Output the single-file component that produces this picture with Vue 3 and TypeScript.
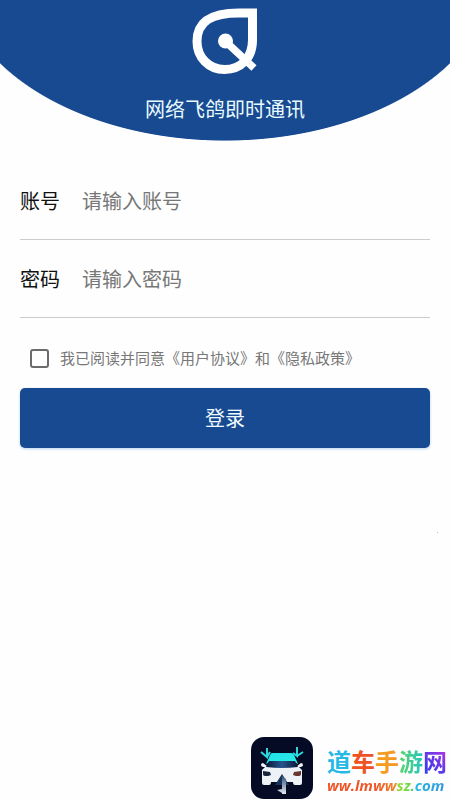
<script setup lang="ts">
import { ref } from 'vue'

const account = ref('')
const password = ref('')
const agreed = ref(false)

const siteName = [
  { char: '道', tone: 'cyan' },
  { char: '车', tone: 'red' },
  { char: '手', tone: 'orange' },
  { char: '游', tone: 'green' },
  { char: '网', tone: 'violet' },
]
</script>

<template>
  <main class="page">
    <header class="hero">
      <svg class="logo" viewBox="0 0 66 66" aria-hidden="true">
        <path d="M60.500 5H47C20 5 5 13 5 33.500C5 49.500 17 61.500 32.500 61.500C49 61.500 60.500 50 60.500 32Z" fill="none" stroke="#fff" stroke-width="9" />
        <path d="M33 33L62 60" stroke="#fff" stroke-width="7.500" />
        <circle cx="33.500" cy="33" r="7.500" fill="#fff" />
      </svg>
      <h1>网络飞鸽即时通讯</h1>
    </header>

    <form class="form" @submit.prevent>
      <div class="field">
        <label for="account">账号</label>
        <input id="account" v-model="account" type="text" placeholder="请输入账号" />
      </div>
      <div class="field">
        <label for="password">密码</label>
        <input id="password" v-model="password" type="password" placeholder="请输入密码" />
      </div>
      <div class="agree">
        <input id="agree" v-model="agreed" type="checkbox" />
        <label for="agree">我已阅读并同意《用户协议》和《隐私政策》</label>
      </div>
      <button class="login" type="submit">登录</button>
    </form>

    <span class="speck" aria-hidden="true"></span>

    <footer class="brand">
      <svg class="badge" viewBox="0 0 62 62" aria-hidden="true">
        <defs>
          <linearGradient id="roof" x1="0" y1="0" x2="1" y2="1">
            <stop offset="0" stop-color="#22dfe8" />
            <stop offset="1" stop-color="#2aeee8" />
          </linearGradient>
          <linearGradient id="glass" x1="0" y1="0" x2="1" y2="0">
            <stop offset="0" stop-color="#0a1738" />
            <stop offset=".5" stop-color="#24558d" />
            <stop offset="1" stop-color="#0a1738" />
          </linearGradient>
          <linearGradient id="stem" x1="0" y1="0" x2="0" y2="1">
            <stop offset="0" stop-color="#35527a" />
            <stop offset="1" stop-color="#e1eaf2" />
          </linearGradient>
        </defs>
        <rect width="62" height="62" rx="13" fill="#050b25" />
        <path d="M21 16h19q2 0 3 2l4 9-4-2H19l-4 2 4-9q1-2 2-2Z" fill="url(#roof)" />
        <path d="M12 26q-2 0-2 2t4 2l-3 3v13q0 2 2 2h5q2 0 2-3h22q0 3 2 3h5q2 0 2-2V33l-3-3q4 0 4-2t-2-2l-4 3H16Z" fill="#edf2f7" />
        <path d="M18 24h26l3 6q-16 2-32 0Z" fill="url(#glass)" />
        <path d="M12 34l7 1 1 3-3 1h-3q-2 0-2-2Z" fill="#17253f" />
        <path d="M50 34l-7 1-1 3 3 1h3q2 0 2-2Z" fill="#68362f" />
        <path d="M31 37l7 11h-3v8h-4v-8h-7Z" fill="#17335a" />
        <path d="M31 39v18h4V42Z" fill="url(#stem)" />
        <path d="M26 53l5-1v4Z" fill="#c3d0df" />
        <path d="M16 11v9L10 15M16 20l3-5M46 10v9l-4-3M46 19l6-4" fill="none" stroke="#2bd7df" stroke-width="2" />
      </svg>
      <div class="site">
        <strong class="name"><span v-for="item in siteName" :key="item.char" :class="item.tone">{{ item.char }}</span></strong>
        <span class="url">ww.lmwwsz.com</span>
      </div>
    </footer>
  </main>
</template>

<style>
body {
  margin: 0;
  background: #fefefe;
}
</style>

<style scoped>
.page {
  display: flex;
  flex-direction: column;
  min-height: 100vh;
  overflow: hidden;
  font-family: "Noto Sans CJK SC", sans-serif;
}
.hero {
  display: flex;
  flex-direction: column;
  align-items: center;
  gap: 20px;
  height: 141px;
  padding-top: 8px;
  box-sizing: border-box;
  background: radial-gradient(ellipse 60% 172px at 50% -31px, #184a91 99.500%, #fefefe 100%);
}
.logo {
  width: 66px;
  height: 66px;
}
h1 {
  margin: 0;
  color: #e8fbff;
  font-size: 20px;
  font-weight: 400;
  line-height: 30px;
}
.form {
  display: flex;
  flex-direction: column;
  padding: 21px 20px 0;
}
.field {
  display: flex;
  align-items: center;
  gap: 22px;
  height: 78px;
  box-sizing: border-box;
  border-bottom: 1px solid #ccc;
  font-size: 20px;
}
.field label {
  color: #111;
}
.field input {
  flex: 1;
  min-width: 0;
  padding: 0;
  border: 0;
  outline: 0;
  background: transparent;
  color: #111;
  font: inherit;
}
.field input::placeholder {
  color: #777;
  opacity: 1;
}
.agree {
  display: flex;
  align-items: center;
  gap: 11px;
  padding: 28px 10px 18px;
  color: #777;
  font-size: 15px;
  line-height: 24px;
}
.agree input {
  appearance: none;
  width: 19px;
  height: 19px;
  margin: 0;
  border: 2px solid #6b6b6b;
  border-radius: 3px;
}
.agree input:checked {
  background: #184a91;
}
.login {
  height: 60px;
  padding: 0 0 2px;
  border: 0;
  border-radius: 5px;
  background: #184a91;
  box-shadow: 0 1px 3px #b7d4ee;
  color: #f0fbff;
  font: 400 20px "Noto Sans CJK SC", sans-serif;
}
.speck {
  align-self: flex-end;
  width: 1px;
  height: 1px;
  margin: 84px 12px 0 0;
  background: #cdbb9c;
}
.brand {
  display: flex;
  align-items: center;
  align-self: flex-end;
  gap: 14px;
  margin-top: auto;
  padding: 0 3px 1px 0;
}
.badge {
  width: 62px;
  height: 62px;
}
.site {
  display: flex;
  flex-direction: column;
  padding-top: 6px;
}
.name {
  font-size: 24px;
  font-weight: 700;
  line-height: 28px;
}
.cyan { color: #26b9e5; }
.red { color: #ee5225; }
.orange { color: #f59a20; }
.green {
  background: linear-gradient(90deg, #58d669, #24c5bd);
  background-clip: text;
  color: transparent;
}
.violet {
  background: linear-gradient(45deg, #3a3df0 20%, #7b35e6 60%, #d03adb);
  background-clip: text;
  color: transparent;
}
.url {
  background: linear-gradient(90deg, #ef5426 40%, #f2802a 56%, #8fdc35 60%, #64d848 70%, #25bbdf 73%, #3192df);
  background-clip: text;
  color: transparent;
  font: italic 700 15px/20px "Open Sans", sans-serif;
}
</style>
